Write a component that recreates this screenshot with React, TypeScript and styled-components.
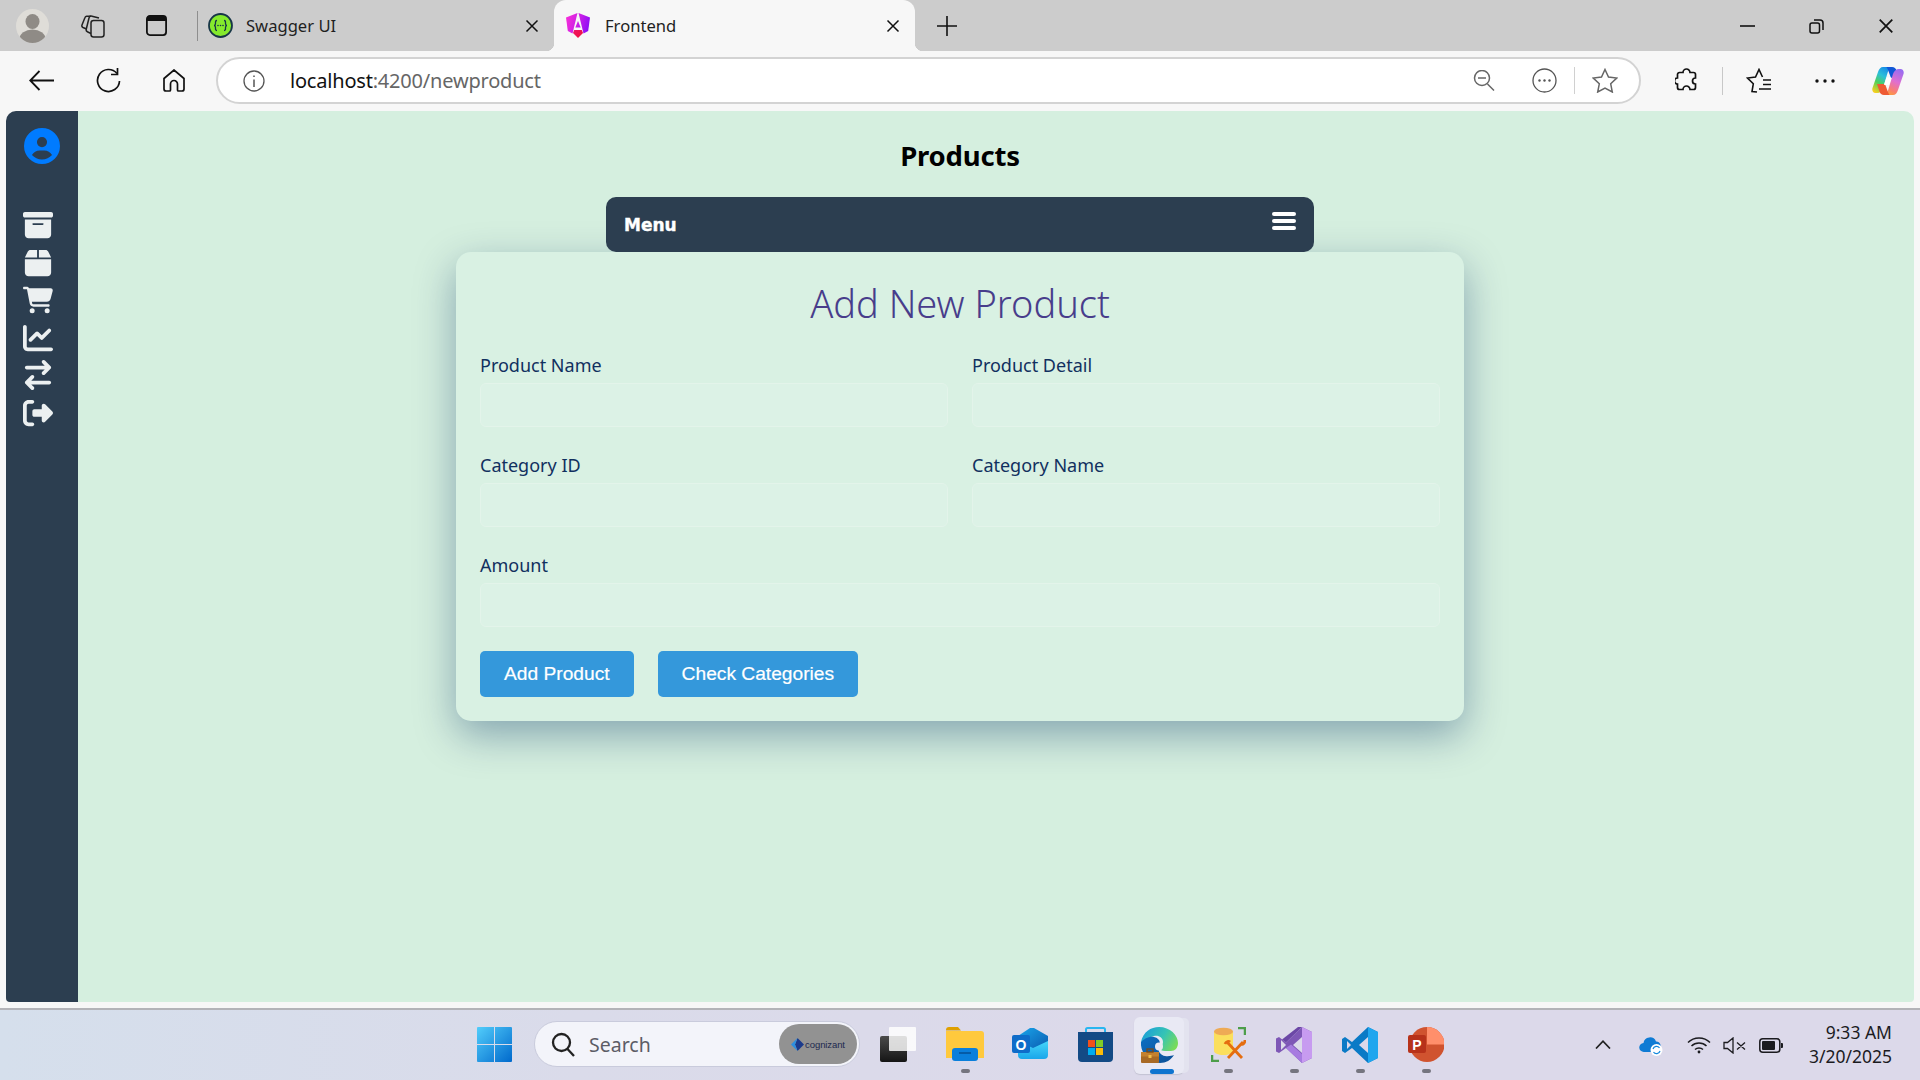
import React from "react";
import styled, { createGlobalStyle } from "styled-components";
import { FaBoxArchive, FaBox, FaCartShopping, FaChartLine, FaArrowRightArrowLeft, FaRightFromBracket, FaCircleUser } from "react-icons/fa6";

const Global = createGlobalStyle`
  html, body { margin: 0; padding: 0; height: 100%; overflow: hidden; background: #f7f7f7; }
  * { box-sizing: border-box; }
  #root { height: 100%; }
`;
const UI = `"Noto Sans", "Open Sans", sans-serif`;

const Shell = styled.div`
  width: 1920px; height: 1080px; display: flex; flex-direction: column; font-family: ${UI}; background: #f7f7f7;
`;
const TabStrip = styled.div`
  height: 51px; flex: none; background: #cccccc; display: flex; align-items: center; padding-left: 16px;
`;
const Slot = styled.div<{ $w: number; $ml?: number; $pt?: number }>`
  flex: none; width: ${p => p.$w}px; margin-left: ${p => p.$ml ?? 0}px; padding-top: ${p => p.$pt ?? 0}px;
  display: flex; align-items: center; justify-content: center; position: relative;
  svg { display: block; flex: none; }
`;
const Divider = styled.div<{ $ml: number; $h: number; $c: string }>`
  flex: none; width: 1px; height: ${p => p.$h}px; margin-left: ${p => p.$ml}px; background: ${p => p.$c};
`;
const Tab = styled.div<{ $active?: boolean; $w: number; $pl: number; $gap: number }>`
  position: relative; flex: none; align-self: flex-end; width: ${p => p.$w}px; height: 51px;
  padding: 0 15px 0 ${p => p.$pl}px; display: flex; align-items: center; gap: ${p => p.$gap}px;
  background: ${p => (p.$active ? "#f7f7f7" : "transparent")};
  border-radius: 12px 12px 0 0;
  ${p => p.$active && `
    &::before, &::after { content: ""; position: absolute; bottom: 0; width: 8px; height: 8px; }
    &::before { left: -8px; background: radial-gradient(circle at 0 0, transparent 8px, #f7f7f7 8.5px); }
    &::after { right: -8px; background: radial-gradient(circle at 100% 0, transparent 8px, #f7f7f7 8.5px); }
  `}
`;
const TabTitle = styled.span`
  font-size: 16.6px; color: #1f1f1f; flex: 1; white-space: nowrap;
`;
const WindowControls = styled.div`
  margin-left: auto; display: flex; align-items: center; padding-right: 26px; gap: 54px;
  svg { display: block; }
`;
const Toolbar = styled.div`
  height: 60px; flex: none; background: #f7f7f7; display: flex; align-items: flex-start; padding: 6px 0 0 29px;
`;
const ToolSlot = styled(Slot)`
  height: 47px;
`;
const AddressBar = styled.div`
  flex: none; margin-left: 31px; width: 1425px; height: 47px; background: #fff; border: 2px solid #d3d3d3; border-radius: 24px;
  display: flex; align-items: center; padding-left: 25px;
`;
const Url = styled.div`
  margin-left: 25px; font-size: 20px; line-height: 24px; padding-top: 1px; letter-spacing: -0.2px; color: #666; flex: 1; white-space: nowrap;
  b { font-weight: 400; color: #111; }
`;
const Page = styled.div`
  flex: none; height: 891px; margin: 0 6px; display: flex; border-radius: 10px 10px 4px 4px; overflow: hidden;
`;
const SideBar = styled.nav`
  width: 72px; flex: none; background: #2c3e50; padding: 17px 0 0 17px; display: flex; flex-direction: column; align-items: flex-start;
  color: #ecf0f1;
`;
const Avatar = styled(FaCircleUser)`
  width: 36px; height: 36px; color: #007bff; margin: 0 0 46px 1px; flex: none;
`;
const SideList = styled.div`
  display: flex; flex-direction: column; gap: 7.5px; align-items: flex-start;
  svg { height: 30px; width: auto; display: block; }
`;
const Main = styled.main`
  flex: 1; background: #d5efdf; display: flex; flex-direction: column; align-items: center; padding-right: 72px;
`;
const PageTitle = styled.h1`
  margin: 0; height: 86px; padding-top: 2px; display: flex; align-items: center; font-size: 27.5px; font-weight: 700; color: #000; letter-spacing: -0.2px;
`;
const MenuBar = styled.div`
  position: relative; z-index: 1; width: 708px; height: 55px; background: #2c3e50; border-radius: 10px; color: #fff;
  display: flex; align-items: center; justify-content: space-between; padding: 0 18px;
`;
const MenuLabel = styled.span`
  font-family: "DejaVu Sans", sans-serif; font-weight: 700; font-size: 17px; -webkit-text-stroke: 0.4px #fff;
`;
const BurgerBox = styled.div`
  width: 24px; display: flex; flex-direction: column; gap: 3.5px; margin-top: -7px;
`;
const BurgerLine = styled.span`
  height: 3.7px; border-radius: 2px; background: #fff;
`;
const Card = styled.section`
  width: 1008px; height: 469px; padding: 24px; background: #d9f1e3; border-radius: 15px;
  box-shadow: 0 14px 40px rgba(0, 45, 100, 0.38);
`;
const CardTitle = styled.h2`
  margin: 0 0 23px; text-align: center; font-size: 38px; line-height: 54px; font-weight: 300; color: #483d8b;
`;
const Grid = styled.div`
  display: grid; grid-template-columns: 1fr 1fr; column-gap: 24px; row-gap: 26px;
`;
const Field = styled.label<{ $wide?: boolean }>`
  display: flex; flex-direction: column; gap: 6px; ${p => p.$wide && "grid-column: 1 / -1;"}
`;
const FieldLabel = styled.span`
  font-size: 18px; line-height: 24px; color: #11305f;
`;
const Input = styled.input`
  height: 44px; width: 100%; background: #dcf2e6; border: 1px solid #e3f4ea; border-radius: 6px; outline: none;
`;
const Actions = styled.div`
  display: flex; gap: 24px; margin-top: 24px;
`;
const Button = styled.button`
  height: 46px; padding: 0 24px; border: none; border-radius: 5px; background: #3498db; color: #fff;
  font-family: "Liberation Sans", Arial, sans-serif; font-size: 19.2px; -webkit-text-stroke: 0.2px #fff;
`;
const PageFoot = styled.div`
  flex: none; height: 6px;
`;
const Taskbar = styled.footer`
  flex: 1; border-top: 2px solid #b3b3b8; background: linear-gradient(90deg, #d5dfec 0%, #dadbea 30%, #dcd9ea 60%, #dcd9ea 100%);
  display: flex; align-items: flex-start; padding-left: 477px; padding-top: 0;
`;
const TaskIcon = styled(Slot)`
  height: 69px; align-items: flex-start; padding-top: ${p => p.$pt ?? 17}px;
`;
const RunDot = styled.span`
  position: absolute; left: 50%; margin-left: -4.5px; top: 59px; width: 9px; height: 4px; border-radius: 2px; background: #75757f;
`;
const SearchPill = styled.div`
  flex: none; width: 326px; height: 46px; margin: 11px 0 0 22px; background: #f3f4fa; border: 1px solid #c9cbdc; border-radius: 23px;
  display: flex; align-items: center; padding-left: 16px; position: relative;
`;
const SearchText = styled.span`
  font-size: 19.5px; color: #5c5c66; margin-left: 14px; flex: 1;
`;
const OrgBadge = styled.div`
  width: 78px; height: 40px; margin-right: 2px; border-radius: 20px; background: #929292; display: flex; align-items: center; justify-content: center; gap: 1px;
`;
const OrgName = styled.span`
  font-family: "Liberation Sans", sans-serif; font-size: 9.5px; color: #20294f; letter-spacing: -0.1px;
`;
const ActiveTask = styled.div`
  position: relative; flex: none; width: 50px; height: 57px; margin: 7px 0 0 21px; border-radius: 6px; background: #e9e9f4;
  box-shadow: 6px 0 0 -1px #e3e3ef, 0 1px 1px #c3c3d3; display: flex; justify-content: center; padding-top: 10px;
`;
const ActiveBar = styled.span`
  position: absolute; left: 16px; bottom: 0; width: 24px; height: 5px; border-radius: 3px; background: #0f74cf;
`;
const Clock = styled.div`
  flex: none; width: 109px; margin: 10px 0 0 0; text-align: right; font-size: 17.5px; line-height: 24px; color: #1b1b1f;
`;

const Close = ({ s = 14 }: { s?: number }) => (
  <svg width={s} height={s} viewBox="0 0 14 14"><path d="M1.5 1.5 12.5 12.5M12.5 1.5 1.5 12.5" stroke="#111" strokeWidth="1.5" /></svg>
);

const Profile = () => (
  <svg width="33" height="34" viewBox="0 0 33 34">
    <defs><clipPath id="pc"><ellipse cx="16.500" cy="17" rx="16.500" ry="17" /></clipPath></defs>
    <ellipse cx="16.500" cy="17" rx="16.500" ry="17" fill="#dfddd8" />
    <g clipPath="url(#pc)"><ellipse cx="16.500" cy="12.500" rx="7" ry="7.500" fill="#8f8b86" /><ellipse cx="16.500" cy="30" rx="13" ry="9.500" fill="#8f8b86" /></g>
  </svg>
);
const Collections = () => (
  <svg width="24" height="24" viewBox="0 0 24 24" fill="none" stroke="#222" strokeWidth="1.500">
    <rect x="10" y="6.500" width="13" height="16.500" rx="2.500" />
    <path d="M10 19.500 6.800 18a2.500 2.500 0 0 1-1.500-3L8 4a2.500 2.500 0 0 1 3-1.800l7 1.800" />
    <path d="M5.500 15 2 13.500A2 2 0 0 1 1 11L4 3.500a2 2 0 0 1 2.500-1.200L10 2.200" />
  </svg>
);
const TabActions = () => (
  <svg width="21" height="21" viewBox="0 0 21 21"><rect x=".9" y=".9" width="19.200" height="19.200" rx="3" fill="none" stroke="#111" strokeWidth="1.800" /><path d="M1 6V3.500A2.500 2.500 0 0 1 3.500 1h14A2.500 2.500 0 0 1 20 3.500V6Z" fill="#111" /></svg>
);
const SwaggerLogo = () => (
  <svg width="25" height="25" viewBox="0 0 25 25">
    <circle cx="12.500" cy="12.500" r="11.500" fill="#85ea2d" stroke="#173647" strokeWidth="1.800" />
    <path d="M9 7.500c-1.800 0-1.500 1.500-1.500 3s-.3 2-1.500 2c1.200 0 1.500.5 1.500 2s-.3 3 1.500 3M16 7.500c1.800 0 1.500 1.500 1.500 3s.3 2 1.500 2c-1.200 0-1.500.5-1.500 2s.3 3-1.500 3" fill="none" stroke="#173647" strokeWidth="1.300" />
    <circle cx="10" cy="12.500" r=".8" fill="#173647" /><circle cx="12.500" cy="12.500" r=".8" fill="#173647" /><circle cx="15" cy="12.500" r=".8" fill="#173647" />
  </svg>
);
const AngularLogo = () => (
  <svg width="24" height="25" viewBox="0 0 24 25">
    <defs>
      <linearGradient id="angL" gradientUnits="userSpaceOnUse" x1="0" y1="4" x2="24" y2="12"><stop offset="0" stopColor="#f82fd8" /><stop offset=".55" stopColor="#c81fe8" /><stop offset="1" stopColor="#8a0cf6" /></linearGradient>
      <linearGradient id="angB" x1="0" y1="0" x2="1" y2="1"><stop offset="0" stopColor="#ee1566" /><stop offset="1" stopColor="#f0103c" /></linearGradient>
    </defs>
    <path d="M11.500 0 0 4.500 1.800 18 6.500 20.500Z" fill="url(#angL)" />
    <path d="M12.500 0 24 4.500 22.200 18 17.500 20.500Z" fill="url(#angL)" />
    <path d="M12 8 14.700 14.500H9.300Z" fill="url(#angL)" />
    <path d="M8.200 17H15.800L17 20 12 25 7 20Z" fill="url(#angB)" />
  </svg>
);
const Plus = () => (<svg width="20" height="20" viewBox="0 0 20 20"><path d="M10 0v20M0 10h20" stroke="#111" strokeWidth="1.600" /></svg>);
const Back = () => (<svg width="25" height="21" viewBox="0 0 25 21" fill="none" stroke="#111" strokeWidth="1.800"><path d="M10.500 1 1.200 10.500l9.300 9.500M1.200 10.500H25" /></svg>);
const Reload = () => (<svg width="25" height="25" viewBox="0 0 25 25" fill="none" stroke="#111" strokeWidth="1.700"><path d="M21 5.500A11 11 0 1 0 23.500 13" /><path d="M21.500 0v6.500H15" /></svg>);
const Home = () => (<svg width="22" height="23" viewBox="0 0 22 23" fill="none" stroke="#111" strokeWidth="1.700"><path d="M1 9.500 11 1l10 8.500V20a2 2 0 0 1-2 2h-3.500a1 1 0 0 1-1-1v-6a3 3 0 0 0-7 0v6a1 1 0 0 1-1 1H3a2 2 0 0 1-2-2Z" /></svg>);
const Info = () => (<svg width="22" height="24" viewBox="0 0 22 24" fill="none" stroke="#555" strokeWidth="1.300"><circle cx="11" cy="12" r="10" /><path d="M11 10.500V18M11 6.500v1.600" strokeWidth="1.500" /></svg>);
const ZoomOut = () => (<svg width="22" height="21" viewBox="0 0 22 21" fill="none" stroke="#666" strokeWidth="1.500"><circle cx="9" cy="8" r="7.500" /><path d="M14.500 14 21 20.500M5 8h8" /></svg>);
const DotsCircle = () => (<svg width="25" height="25" viewBox="0 0 25 25" fill="none"><circle cx="12.500" cy="12.500" r="11.500" stroke="#555" strokeWidth="1.300" /><circle cx="7.500" cy="12.500" r="1.200" fill="#555" /><circle cx="12.500" cy="12.500" r="1.200" fill="#555" /><circle cx="17.500" cy="12.500" r="1.200" fill="#555" /></svg>);
const Star = () => (<svg width="26" height="25" viewBox="0 0 26 25" fill="none" stroke="#666" strokeWidth="1.500"><path d="m13 1.500 3.500 7.600 8.200 1-6 5.700 1.600 8.200L13 20l-7.300 4 1.600-8.200-6-5.700 8.200-1Z" /></svg>);
const Puzzle = () => (<svg width="23" height="25" viewBox="0 0 23 25" fill="none" stroke="#111" strokeWidth="1.700"><path d="M8 4.500a3.500 3.500 0 0 1 7 0h3.500a2 2 0 0 1 2 2v3.500a3 3 0 0 0 0 6v3.500a2 2 0 0 1-2 2H15a3.500 3.500 0 0 0-7 0H4.500a2 2 0 0 1-2-2V16a3 3 0 0 1 0-6V6.500a2 2 0 0 1 2-2Z" /></svg>);
const FavStar = () => (<svg width="26" height="25" viewBox="0 0 26 25" fill="none" stroke="#111" strokeWidth="1.600"><path d="M11 24 6 23.500l1.300-7.700L1.500 10l8-1L13 1.500 16.500 9M17 12h8M17 16.500h8M13 21h12" /></svg>);
const MoreDots = () => (<svg width="20" height="4" viewBox="0 0 20 4" fill="#111"><circle cx="2" cy="2" r="1.700" /><circle cx="10" cy="2" r="1.700" /><circle cx="18" cy="2" r="1.700" /></svg>);
const Copilot = () => (
  <svg width="32" height="30" viewBox="0 0 32 30">
    <defs>
      <linearGradient id="c1" x1="0.700" y1="0" x2="0.200" y2="1"><stop offset="0" stopColor="#1688e8" /><stop offset=".35" stopColor="#2cc0d8" /><stop offset=".65" stopColor="#4fd05a" /><stop offset="1" stopColor="#f6cf1e" /></linearGradient>
      <linearGradient id="c2" x1="0.700" y1="0" x2="0.300" y2="1"><stop offset="0" stopColor="#9a6cf0" /><stop offset=".45" stopColor="#e06fd0" /><stop offset=".8" stopColor="#fa7f70" /><stop offset="1" stopColor="#fba03c" /></linearGradient>
    </defs>
    <path d="M11 1h10c-3 0-4 1.500-5 4.500L11 22c-1 3-3 5-6 5H3.500C1 27-.3 24.500.5 22L6 6c1-3 2.500-5 5-5Z" fill="url(#c1)" />
    <path d="M14 1h6c2.500 0 3.800 1.500 4.500 3.500L27 12h-8l-3-8c-.5-1.500-1-3-2-3Z" fill="#1157d6" />
    <path d="M21 29H11c3 0 4-1.500 5-4.500L21 8c1-3 3-5 6-5h1.500C31 3 32.300 5.500 31.500 8L26 24c-1 3-2.500 5-5 5Z" fill="url(#c2)" />
    <path d="M18 29h-6c-2.500 0-3.800-1.500-4.500-3.500L5 18h8l3 8c.5 1.500 1 3 2 3Z" fill="#ee5b34" />
    <path d="M14.500 11.500h5L17 19h-5Z" fill="#fff" />
  </svg>
);
const Windows = () => (
  <svg width="35" height="35" viewBox="0 0 35 35">
    <defs><linearGradient id="w" x1="0" y1="0" x2="1" y2="1"><stop offset="0" stopColor="#52cdfb" /><stop offset="1" stopColor="#0069cc" /></linearGradient></defs>
    <path d="M1 0h16v17H0V1a1 1 0 0 1 1-1ZM18 0h16a1 1 0 0 1 1 1v16H18ZM0 18h17v17H1a1 1 0 0 1-1-1ZM18 18h17v16a1 1 0 0 1-1 1H18Z" fill="url(#w)" />
  </svg>
);
const SearchIcon = () => (<svg width="24" height="25" viewBox="0 0 24 25" fill="none" stroke="#222" strokeWidth="2.300"><circle cx="10.500" cy="10.500" r="8.500" /><path d="m16.500 17 6.500 7" /></svg>);
const CogMark = () => (<svg width="13" height="13" viewBox="0 0 13 13"><path d="M6.500 0 13 6.500 6.500 13 4 6.500Z" fill="#1b3a8c" /><path d="M6.500 0 4 6.500 6.500 13 0 6.500Z" fill="#2d8fe0" /></svg>);
const TaskView = () => (
  <svg width="36" height="35" viewBox="0 0 36 35">
    <defs><linearGradient id="tv" x1="0" y1="0" x2="0" y2="1"><stop offset="0" stopColor="#4a4a4a" /><stop offset="1" stopColor="#151515" /></linearGradient></defs>
    <rect x="0" y="9" width="27" height="26" rx="2" fill="url(#tv)" />
    <rect x="9" y="0" width="27" height="24" rx="1" fill="#fff" fillOpacity=".82" />
  </svg>
);
const Files = () => (
  <svg width="38" height="34" viewBox="0 0 38 34">
    <path d="M0 3a3 3 0 0 1 3-3h9l3 3.500H0Z" fill="#dfa000" />
    <path d="M0 4h35a3 3 0 0 1 3 3v24H0Z" fill="#ffc93d" />
    <rect x="6" y="21" width="26" height="13" rx="3" transform="translate(0 0)" fill="#0a7fdb" />
    <path d="M13 26h12" stroke="#044f94" strokeWidth="1.500" />
  </svg>
);
const Outlook = () => (
  <svg width="36" height="31" viewBox="0 0 36 31">
    <defs><linearGradient id="o1" x1="0" y1="0" x2="1" y2="1"><stop offset="0" stopColor="#1aa5ea" /><stop offset="1" stopColor="#0a5bb0" /></linearGradient><linearGradient id="o2" x1="0" y1="0" x2="0" y2="1"><stop offset="0" stopColor="#45d6fa" /><stop offset="1" stopColor="#1aa6ea" /></linearGradient></defs>
    <path d="M18 0h4l14 8v7L20 22H6V8Z" fill="url(#o1)" />
    <path d="M6 13 21 20l15-7v14a4 4 0 0 1-4 4H10a4 4 0 0 1-4-4Z" fill="url(#o2)" />
    <rect x="0" y="7" width="18" height="18" rx="2" fill="#0f6cc9" />
    <text x="9" y="21.500" textAnchor="middle" fontFamily="Liberation Sans, sans-serif" fontWeight="700" fontSize="14" fill="#fff">O</text>
  </svg>
);
const Store = () => (
  <svg width="35" height="35" viewBox="0 0 35 35">
    <path d="M8 7V2.500A1.500 1.500 0 0 1 9.500 1h16A1.500 1.500 0 0 1 27 2.500V7" fill="none" stroke="#29b6f0" strokeWidth="2" />
    <path d="M0 5h35v26a4 4 0 0 1-4 4H4a4 4 0 0 1-4-4Z" fill="#134a85" />
    <rect x="10" y="13" width="7" height="7" fill="#f1511b" /><rect x="18" y="13" width="7" height="7" fill="#80cc28" /><rect x="10" y="21" width="7" height="7" fill="#00adef" /><rect x="18" y="21" width="7" height="7" fill="#fbbc09" />
  </svg>
);
const Edge = () => (
  <svg width="37" height="36" viewBox="0 0 37 36">
    <defs><linearGradient id="e1" x1="0" y1="0.300" x2="1" y2="0.700"><stop offset="0" stopColor="#1b9fd8" /><stop offset=".55" stopColor="#36c4b4" /><stop offset="1" stopColor="#7bdc56" /></linearGradient><linearGradient id="e2" x1="0" y1="0" x2="1" y2="1"><stop offset="0" stopColor="#0e6fc2" /><stop offset="1" stopColor="#0b4f96" /></linearGradient></defs>
    <path d="M0 15C2 5 10 0 18 0c11 0 19 8 19 16 0 5-3 8-7 8h-6c-3 0-5-1-5-3s3-2 3-6-4-7-9-6-9 5-13 6Z" fill="url(#e1)" />
    <path d="M0 15c3-3 8-6 13-5s7 5 5 8c-2 5 1 10 6 11 3 .5 7 0 9-1-3 5-8 8-14 8C8 36-1 26 0 15Z" fill="url(#e2)" />
    <circle cx="18" cy="19.500" r="4" fill="#e9e9f4" />
    <rect x="0" y="25" width="18" height="11" rx="1" fill="#a86a25" /><rect x="0" y="25" width="18" height="4.500" fill="#c4812f" /><rect x="6" y="22" width="6" height="3" fill="none" stroke="#7b4a17" strokeWidth="1.300" /><rect x="7.500" y="28" width="3" height="3" fill="#f3c04a" />
  </svg>
);
const DbTool = () => (
  <svg width="35" height="35" viewBox="0 0 35 35">
    <path d="M27 1h7v7" fill="none" stroke="#4d9e4a" strokeWidth="2.500" /><path d="M1 28v6h7" fill="none" stroke="#4d9e4a" strokeWidth="2.500" />
    <path d="M3 4h19v20c0 2-4 4-9.500 4S3 26 3 24Z" fill="#fbdf5d" /><ellipse cx="12.500" cy="4.500" rx="9.500" ry="3.800" fill="#eeaa55" />
    <g stroke="#e56d0f" strokeWidth="2.800" fill="none"><path d="M16 15 31 31M32 15 17 31" /><path d="M14 17c1-3 4-3 5-2M34 13c0 3-2 5-4 4" /></g>
  </svg>
);
const VStudio = () => (
  <svg width="36" height="36" viewBox="0 0 36 36">
    <path d="M26 0 36 5v26l-10 5-16-15L3 26 0 24.500V11.500L3 10l7 5.500Z" fill="#7e57b6" />
    <path d="M26 0 36 5v26l-10 5Z" fill="#c79bf0" />
    <path d="M26 0 10 15.500l-4-3L22 0Z" fill="#6b47a6" />
    <path d="M10 21l16 15 0-9-11-9.500Z" fill="#a77be0" />
    <path d="M5 13v10l5-5Z" fill="#dcd9ea" />
    <path d="M26 10v16l-9-8Z" fill="#dcd9ea" />
  </svg>
);
const VSCode = () => (
  <svg width="36" height="36" viewBox="0 0 36 36">
    <path d="M26 0 36 5v26l-10 5-16-15-7 5-3-2v-12l3-2 7 5Z" fill="#0a7ac6" />
    <path d="M26 0 36 5v26l-10 5Z" fill="#20a6ee" />
    <path d="M5 14v8l4-4Z" fill="#dcd9ea" /><path d="M26 10v16l-9-8Z" fill="#dcd9ea" />
  </svg>
);
const PowerPoint = () => (
  <svg width="36" height="35" viewBox="0 0 36 35">
    <circle cx="19" cy="17.500" r="17.500" fill="#d0532f" />
    <path d="M19 0a17.500 17.500 0 0 1 17.500 17.500H19Z" fill="#ff8f6b" />
    <rect x="0" y="8" width="18" height="18" rx="2" fill="#b7321a" />
    <text x="9" y="22.500" textAnchor="middle" fontFamily="Liberation Sans, sans-serif" fontWeight="700" fontSize="14" fill="#fff">P</text>
  </svg>
);
const Chevron = () => (<svg width="16" height="9" viewBox="0 0 16 9" fill="none" stroke="#222" strokeWidth="1.700"><path d="M1 8.500 8 1.200l7 7.300" /></svg>);
const Cloud = () => (
  <svg width="24" height="19" viewBox="0 0 24 19">
    <path d="M5 15a4.500 4.500 0 0 1-.5-9A6.500 6.500 0 0 1 17 4.500a4.500 4.500 0 0 1 3 8V15Z" fill="#0f7bd4" />
    <circle cx="17.500" cy="13" r="6" fill="#fff" />
    <path d="M14 12a3.600 3.600 0 0 1 6.500-1M21 14a3.600 3.600 0 0 1-6.500 1" fill="none" stroke="#1488dc" strokeWidth="1.200" />
  </svg>
);
const Wifi = () => (<svg width="24" height="18" viewBox="0 0 24 18" fill="none" stroke="#1b1b1f" strokeWidth="1.500"><path d="M1 6.500c6-6 16-6 22 0M4.500 10c4-4 11-4 15 0M8 13.500c2.200-2 5.800-2 8 0" /><circle cx="12" cy="16" r="1.400" fill="#1b1b1f" stroke="none" /></svg>);
const Mute = () => (<svg width="23" height="17" viewBox="0 0 23 17" fill="none" stroke="#1b1b1f" strokeWidth="1.300"><path d="M1 5.500h3.500L10 1v15l-5.500-4.500H1ZM14 5.500l8 7M22 5.500l-8 7" /></svg>);
const Battery = () => (<svg width="24" height="15" viewBox="0 0 24 15"><rect x=".8" y=".8" width="20" height="13.400" rx="3" fill="none" stroke="#1b1b1f" strokeWidth="1.500" /><rect x="3" y="3" width="13" height="9" rx="1" fill="#1b1b1f" /><path d="M22 5h1a1 1 0 0 1 1 1v3a1 1 0 0 1-1 1h-1Z" fill="#1b1b1f" /></svg>);

const fields = [
  { label: "Product Name" },
  { label: "Product Detail" },
  { label: "Category ID" },
  { label: "Category Name" },
  { label: "Amount", wide: true },
];

export default function App() {
  return (
    <Shell>
      <Global />
      <TabStrip>
        <Slot $w={33}><Profile /></Slot>
        <Slot $w={24} $ml={32}><Collections /></Slot>
        <Slot $w={21} $ml={41}><TabActions /></Slot>
        <Divider $ml={30} $h={30} $c="#8e8e8e" />
        <Tab $w={356} $pl={10} $gap={13}>
          <SwaggerLogo />
          <TabTitle>Swagger UI</TabTitle>
          <Close />
        </Tab>
        <Tab $active $w={361} $pl={12} $gap={15}>
          <AngularLogo />
          <TabTitle>Frontend</TabTitle>
          <Close />
        </Tab>
        <Slot $w={20} $ml={22}><Plus /></Slot>
        <WindowControls>
          <svg width="15" height="2" viewBox="0 0 15 2"><path d="M0 1h15" stroke="#111" strokeWidth="1.600" /></svg>
          <svg width="15" height="16" viewBox="0 0 15 16" fill="none" stroke="#111" strokeWidth="1.500"><rect x="1" y="5" width="9.500" height="10" rx="2" /><path d="M5 2h6a3 3 0 0 1 3 3v7" /></svg>
          <Close s={16} />
        </WindowControls>
      </TabStrip>
      <Toolbar>
        <ToolSlot $w={25}><Back /></ToolSlot>
        <ToolSlot $w={25} $ml={42}><Reload /></ToolSlot>
        <ToolSlot $w={22} $ml={42}><Home /></ToolSlot>
        <AddressBar>
          <Info />
          <Url><b>localhost</b>:4200/newproduct</Url>
          <Slot $w={22}><ZoomOut /></Slot>
          <Slot $w={25} $ml={37}><DotsCircle /></Slot>
          <Divider $ml={17} $h={27} $c="#d0d0d0" />
          <Slot $w={26} $ml={17}><Star /></Slot>
          <Slot $w={21} />
        </AddressBar>
        <ToolSlot $w={23} $ml={34}><Puzzle /></ToolSlot>
        <ToolSlot $w={1} $ml={24}><Divider $ml={0} $h={28} $c="#c8c8c8" /></ToolSlot>
        <ToolSlot $w={26} $ml={23}><FavStar /></ToolSlot>
        <ToolSlot $w={20} $ml={43}><MoreDots /></ToolSlot>
        <ToolSlot $w={32} $ml={37}><Copilot /></ToolSlot>
      </Toolbar>
      <Page>
        <SideBar>
          <Avatar />
          <SideList>
            <FaBoxArchive />
            <FaBox />
            <FaCartShopping />
            <FaChartLine />
            <FaArrowRightArrowLeft />
            <FaRightFromBracket />
          </SideList>
        </SideBar>
        <Main>
          <PageTitle>Products</PageTitle>
          <MenuBar>
            <MenuLabel>Menu</MenuLabel>
            <BurgerBox><BurgerLine /><BurgerLine /><BurgerLine /></BurgerBox>
          </MenuBar>
          <Card>
            <CardTitle>Add New Product</CardTitle>
            <Grid>
              {fields.map(f => (
                <Field key={f.label} $wide={f.wide}>
                  <FieldLabel>{f.label}</FieldLabel>
                  <Input />
                </Field>
              ))}
            </Grid>
            <Actions>
              <Button>Add Product</Button>
              <Button>Check Categories</Button>
            </Actions>
          </Card>
        </Main>
      </Page>
      <PageFoot />
      <Taskbar>
        <TaskIcon $w={35}><Windows /></TaskIcon>
        <SearchPill>
          <SearchIcon />
          <SearchText>Search</SearchText>
          <OrgBadge><CogMark /><OrgName>cognizant</OrgName></OrgBadge>
        </SearchPill>
        <TaskIcon $w={36} $ml={20}><TaskView /></TaskIcon>
        <TaskIcon $w={38} $ml={30}><Files /><RunDot /></TaskIcon>
        <TaskIcon $w={36} $ml={28} $pt={18}><Outlook /></TaskIcon>
        <TaskIcon $w={35} $ml={30}><Store /></TaskIcon>
        <ActiveTask><Edge /><ActiveBar /></ActiveTask>
        <TaskIcon $w={35} $ml={27}><DbTool /><RunDot /></TaskIcon>
        <TaskIcon $w={36} $ml={30}><VStudio /><RunDot /></TaskIcon>
        <TaskIcon $w={36} $ml={30}><VSCode /><RunDot /></TaskIcon>
        <TaskIcon $w={36} $ml={30}><PowerPoint /><RunDot /></TaskIcon>
        <TaskIcon $w={16} $ml={151} $pt={30}><Chevron /></TaskIcon>
        <TaskIcon $w={24} $ml={28} $pt={27}><Cloud /></TaskIcon>
        <TaskIcon $w={24} $ml={24} $pt={26}><Wifi /></TaskIcon>
        <TaskIcon $w={23} $ml={12} $pt={27}><Mute /></TaskIcon>
        <TaskIcon $w={24} $ml={13} $pt={28}><Battery /></TaskIcon>
        <Clock>9:33 AM<br />3/20/2025</Clock>
      </Taskbar>
    </Shell>
  );
}
